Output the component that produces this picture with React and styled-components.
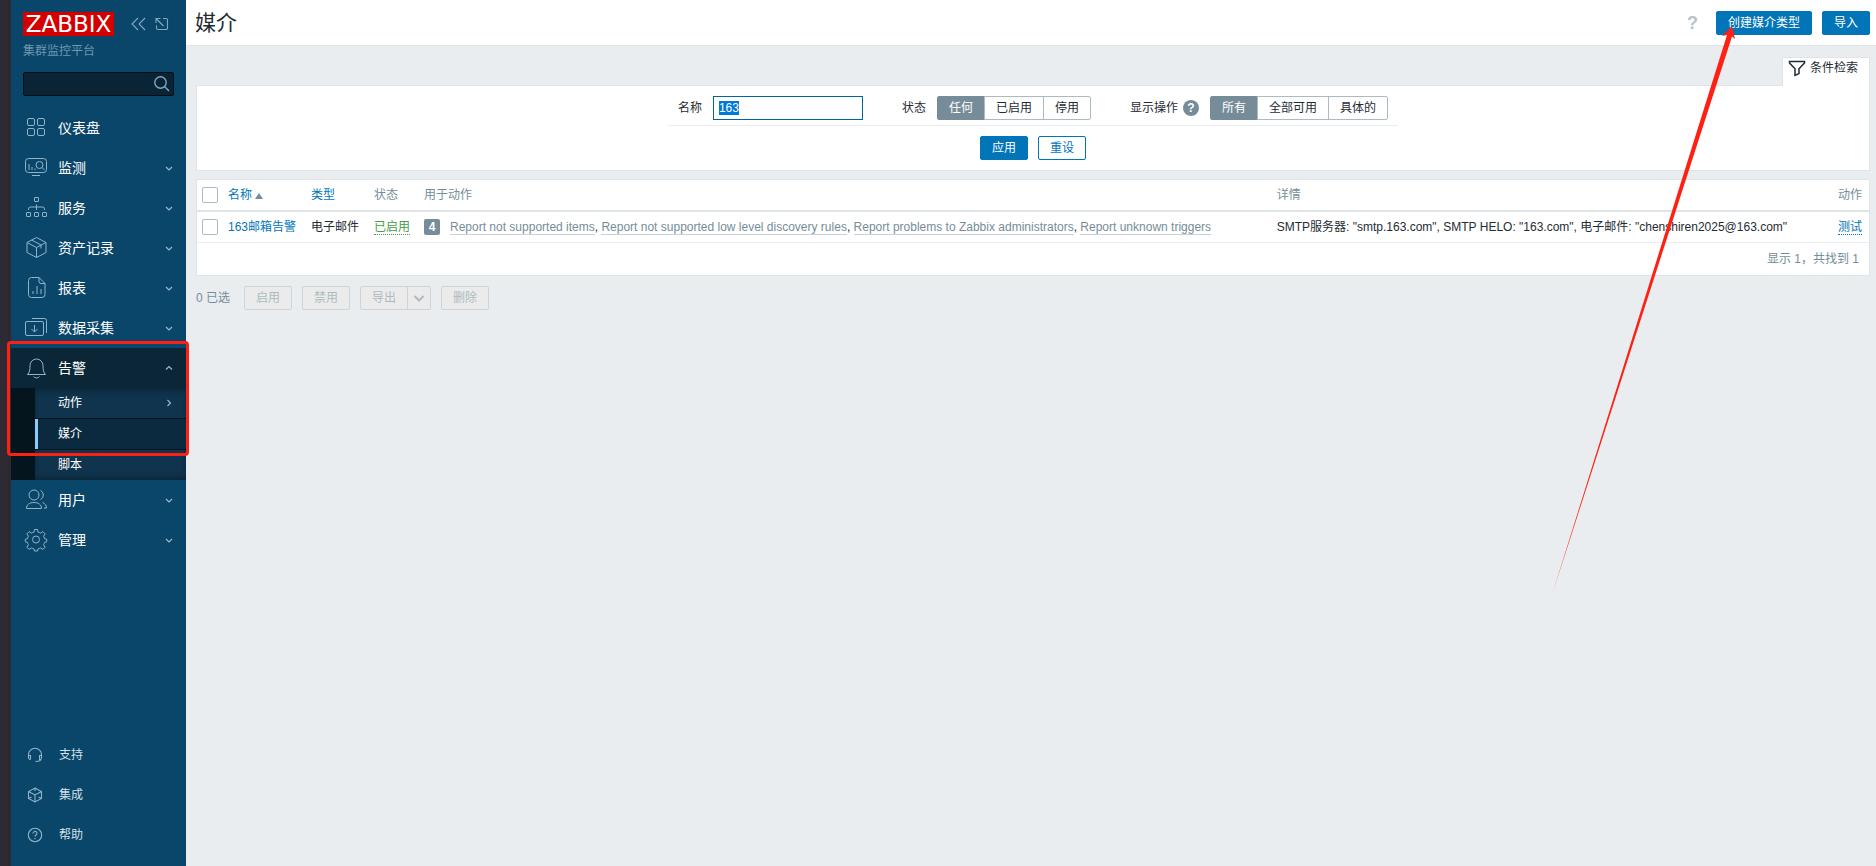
import React, { useEffect, useRef } from "react";
import styled, { createGlobalStyle, css } from "styled-components";

const Global = createGlobalStyle`
  *, *::before, *::after { box-sizing: border-box; }
  html, body { margin: 0; padding: 0; }
  body {
    background: #e9edf0;
    color: #1f2c33;
    font-family: "Liberation Sans", "Noto Sans CJK SC", sans-serif;
    font-size: 12px;
    line-height: 16px;
  }
  button, input { font-family: inherit; font-size: inherit; line-height: inherit; color: inherit; margin: 0; }
  a { text-decoration: none; }
  ul { list-style: none; margin: 0; padding: 0; }
  ::selection { background: #0078d7; color: #fff; }
`;

const Page = styled.div`
  position: relative;
  display: flex;
  min-height: 100vh;
  overflow: hidden;
`;

const Edge = styled.div`
  flex: none;
  width: 11px;
  background: linear-gradient(90deg, #2d2a34 70%, #2b2729 75%, #2f2c30);
`;

/* Sidebar */
const Sidebar = styled.aside`
  position: relative;
  flex: none;
  display: flex;
  flex-direction: column;
  width: 175px;
  padding: 12px 0 11px;
  background: #0a466a;
`;

const Brand = styled.div`
  display: flex;
  align-items: center;
  gap: 17px;
  height: 24px;
  padding: 0 12px;
`;

const Logo = styled.a`
  width: 91px;
  height: 24px;
  background: #d40000;
  color: #fff;
  font-family: "DejaVu Sans", sans-serif;
  font-size: 23px;
  line-height: 24px;
  text-align: center;
`;

const BrandTools = styled.div`
  display: flex;
  gap: 9px;
`;

const IconButton = styled.button`
  display: flex;
  padding: 0;
  border: 0;
  background: none;
  color: #7fa9c2;
  cursor: pointer;
`;

const ServerName = styled.div`
  padding: 7px 12px 0;
  color: #6f97b0;
`;

const Search = styled.form`
  display: flex;
  align-items: center;
  height: 24px;
  margin: 13px 12px 12px;
  padding-right: 3px;
  border: 1px solid #020f17;
  border-radius: 2px;
  background: #0a2435;
`;

const SearchInput = styled.input`
  flex: 1;
  min-width: 0;
  border: 0;
  outline: 0;
  background: none;
  color: #fff;
`;

const Menu = styled.ul`
  flex: 1;
`;

const MenuLink = styled.a`
  display: flex;
  align-items: center;
  height: 40px;
  padding: 0 12px 0 13px;
  color: #fff;
  font-size: 14px;
  background: ${(p) => (p.$open ? "#0a2637" : "none")};
`;

const MenuIcon = styled.span`
  display: flex;
  width: 34px;
  height: 26px;
  color: #8fb5cb;
`;

const MenuLabel = styled.span`
  flex: 1;
`;

const Caret = styled.svg`
  margin-right: 1px;
  color: #9dbccd;
`;

const SubMenu = styled.ul`
  border-left: 24px solid #04151e;
  box-shadow: inset 0 6px 6px -4px #0a2435, inset 0 -6px 6px -4px #0a2435;
  background: #10344d;
`;

const SubItem = styled.li`
  & + & { border-top: 1px solid #04151e; }
`;

const SubLink = styled.a`
  display: flex;
  align-items: center;
  height: 30px;
  padding: 0 12px 0 20px;
  border-left: 3px solid transparent;
  color: #fff;
  ${(p) => p.$current && css`
    border-left-color: #87ceff;
    background: #0b2a3f;
  `}
`;

const FootLink = styled.a`
  display: flex;
  align-items: center;
  gap: 16px;
  height: 40px;
  padding: 0 16px;
  color: #d3e0e8;
  svg { color: #8fb5cb; }
`;

/* Content */
const Content = styled.div`
  flex: 1;
  min-width: 0;
`;

const Header = styled.header`
  display: flex;
  align-items: center;
  gap: 10px;
  height: 46px;
  padding: 0 6px 0 9px;
  border-bottom: 1px solid #dfe4e7;
  background: #fff;
`;

const Title = styled.h1`
  flex: 1;
  margin: 0;
  font-size: 21px;
  line-height: 24px;
  font-weight: 400;
`;

const HelpLink = styled.a`
  margin-right: 8px;
  color: #b6c3ca;
  font-size: 18px;
  line-height: 24px;
  font-weight: 700;
`;

const Button = styled.button`
  height: 24px;
  padding: 0 11px;
  border: 1px solid #0275b8;
  border-radius: 2px;
  background: ${(p) => (p.$alt ? "#fff" : "#0275b8")};
  color: ${(p) => (p.$alt ? "#0275b8" : "#fff")};
  line-height: 22px;
  white-space: nowrap;
  cursor: pointer;
  &:disabled {
    border-color: #ccd5d9;
    background: #ebebeb;
    color: #acbbc2;
    cursor: default;
  }
`;

const Main = styled.main`
  padding: 11px 6px 0 10px;
`;

const Tabs = styled.div`
  display: flex;
  justify-content: flex-end;
`;

const Tab = styled.button`
  display: flex;
  align-items: flex-start;
  gap: 4px;
  height: 29px;
  margin-bottom: -1px;
  padding: 2px 11px 0 5px;
  border: 1px solid #dfe4e7;
  border-bottom: 0;
  background: #fff;
  position: relative;
  cursor: pointer;
  line-height: 16px;
`;

const Panel = styled.section`
  margin-bottom: 8px;
  border: 1px solid #dfe4e7;
  background: #fff;
`;

const FilterForm = styled.form`
  display: flex;
  flex-direction: column;
  align-items: center;
  gap: 10px;
  padding: 10px 0;
`;

const FilterFields = styled.div`
  display: flex;
  align-items: center;
  padding: 0 10px 5px;
  border-bottom: 1px solid #ebeef0;
`;

const Field = styled.div`
  display: flex;
  align-items: center;
  gap: 10px;
  & + & { margin-left: 39px; }
`;

const FieldLabel = styled.span`
  display: flex;
  align-items: center;
  gap: 5px;
  padding-right: 1px;
  white-space: nowrap;
`;

const TextInput = styled.input`
  width: 150px;
  height: 24px;
  padding: 0 5px;
  border: 1px solid #02659f;
  outline: 0;
  background: #fff;
`;

const HelpDot = styled.button`
  width: 16px;
  height: 16px;
  padding: 0;
  border: 0;
  border-radius: 50%;
  background: #768d99;
  color: #fff;
  font-weight: 700;
  line-height: 16px;
`;

const Segments = styled.div`
  display: flex;
`;

const SegmentRadio = styled.input`
  position: absolute;
  opacity: 0;
`;

const Segment = styled.label`
  height: 24px;
  padding: 0 11px;
  border: 1px solid #acbbc2;
  line-height: 22px;
  cursor: pointer;
  & + & { margin-left: -1px; }
  &:first-child { border-radius: 2px 0 0 2px; }
  &:last-child { border-radius: 0 2px 2px 0; }
  &:has(:checked) {
    border-color: #768d99;
    background: #768d99;
    color: #fff;
  }
`;

const ButtonRow = styled.div`
  display: flex;
  gap: 10px;
`;

const Table = styled.table`
  width: 100%;
  table-layout: fixed;
  border-collapse: separate;
  border-spacing: 0;
  white-space: nowrap;
`;

const Col = styled.col`
  width: ${(p) => p.$w};
`;

const Th = styled.th`
  height: 32px;
  padding: ${(p) => (p.$right ? "0 7px" : "0 5px")};
  border-bottom: 2px solid #dfe4e7;
  color: #768d99;
  font-weight: 400;
  text-align: ${(p) => (p.$right ? "right" : "left")};
`;

const Td = styled.td`
  height: 31px;
  padding: ${(p) => (p.$right ? "0 7px" : "0 5px")};
  border-bottom: 1px solid #ebeef0;
  text-align: ${(p) => (p.$right ? "right" : "left")};
`;

const Check = styled.input`
  appearance: none;
  display: block;
  width: 16px;
  height: 16px;
  margin: 0;
  border: 1px solid #acbbc2;
  border-radius: 2px;
  background: #fff;
`;

const Link = styled.a`
  color: #0275b8;
`;

const DottedLink = styled.a`
  border-bottom: 1px dotted;
  color: ${(p) => (p.$ok ? "#429e47" : "#0275b8")};
`;

const GreyLink = styled.a`
  border-bottom: 1px solid #c8d1d6;
  color: #768d99;
`;

const SortMark = styled.span`
  display: inline-block;
  margin-left: 3px;
  border: 4px solid transparent;
  border-top: 0;
  border-bottom: 6px solid #768d99;
`;

const Count = styled.span`
  display: inline-block;
  width: 16px;
  margin-right: 10px;
  border-radius: 2px;
  background: #768d99;
  color: #fff;
  font-weight: 700;
  text-align: center;
`;

const TableFoot = styled.div`
  padding: 8px 10px;
  color: #768d99;
  text-align: right;
`;

const ActionBar = styled.div`
  display: flex;
  align-items: center;
  gap: 10px;
  margin-top: 10px;
  color: #768d99;
`;

const Selected = styled.span`
  margin-right: 4px;
`;

const Split = styled.div`
  display: flex;
  ${Button}:first-child { border-radius: 2px 0 0 2px; }
  ${Button}:last-child {
    display: flex;
    align-items: center;
    margin-left: -1px;
    padding: 0 5px;
    border-radius: 0 2px 2px 0;
  }
`;

/* Annotations drawn over the page */
const Highlight = styled.div`
  position: absolute;
  top: 341px;
  left: -4px;
  right: -3px;
  height: 115px;
  border: 3px solid #fe2012;
  border-radius: 4px;
  pointer-events: none;
  z-index: 2;
`;

const Arrow = styled.svg`
  position: absolute;
  top: 26px;
  right: 140px;
  pointer-events: none;
`;

const glyphs = {
  dashboard: (
    <>
      <rect x="2.5" y="3.5" width="7" height="7" rx="1.5" />
      <rect x="12.5" y="3.5" width="7" height="7" rx="1.5" />
      <rect x="2.5" y="13.5" width="7" height="7" rx="1.5" />
      <rect x="12.5" y="13.5" width="7" height="7" rx="1.5" />
    </>
  ),
  monitoring: (
    <>
      <rect x="0.5" y="3.5" width="21" height="14" rx="3" />
      <path d="M7 20.5h8M4 9v6M7 12v3M10 13.500v1.500M17 12.500l2.500 2.500" />
      <circle cx="14.500" cy="10" r="3.500" />
    </>
  ),
  services: (
    <>
      <rect x="9.500" y="2.500" width="4" height="4" rx="0.500" />
      <rect x="1.500" y="17.500" width="4" height="4" rx="0.500" />
      <rect x="9.500" y="17.500" width="4" height="4" rx="0.500" />
      <rect x="17.500" y="17.500" width="4" height="4" rx="0.500" />
      <path d="M11.500 9.500v5.500M3.500 15v-1a2 2 0 0 1 2-2h12a2 2 0 0 1 2 2v1" />
    </>
  ),
  inventory: (
    <>
      <path d="M11.500 2.500l9.500 5v10l-9.500 5l-9.500-5V7.500z" />
      <path d="M2 7.500l9.500 5l9.500-5M11.500 12.500V22.500M6.500 5l9.500 5v3.500" />
    </>
  ),
  reports: (
    <>
      <path d="M14 2.500H6.500a3 3 0 0 0-3 3v14a3 3 0 0 0 3 3h10.500a3 3 0 0 0 3-3V8.500zM14 2.500v4a2 2 0 0 0 2 2h4" />
      <path d="M8 16v3M12 11v8M16 14v5" />
    </>
  ),
  collection: (
    <>
      <rect x="0.500" y="6.500" width="18" height="14" rx="1.500" />
      <path d="M7 3.500h12.500a2 2 0 0 1 2 2V18M9.500 10v7M6.500 14l3 3l3-3" />
    </>
  ),
  alerts: (
    <path d="M2.500 19.500c2-2 2.500-4.500 2.500-9a6.500 6.500 0 0 1 13 0c0 4.500 0.500 7 2.500 9zM8.500 21.500a3.200 2.200 0 0 0 6 0" />
  ),
  users: (
    <>
      <circle cx="9" cy="8" r="5" />
      <path d="M1.500 21.500c0-4 3-6 7.500-6s7.500 2 7.500 6zM15.500 3.500a5 5 0 0 1 0 9M17.500 15.500c2.500 1 4 3 4 5.500h-2.500" />
    </>
  ),
  admin: (
    <>
      <circle cx="11" cy="12.500" r="3.500" />
      <path d="M9.500 2.500h3l0.600 2.700q1.400 0.200 2.400 0.900l2.400-1.500l2.200 2.200l-1.500 2.400q0.700 1 0.900 2.400l2.200 0.600v2.600l-2.200 0.600q-0.200 1.400-0.900 2.400l1.500 2.400l-2.200 2.200l-2.400-1.500q-1 0.700-2.400 0.900l-0.600 2.200h-3l-0.600-2.200q-1.400-0.200-2.400-0.900l-2.400 1.500l-2.200-2.200l1.500-2.400q-0.700-1-0.900-2.400l-2.200-0.600v-2.600l2.200-0.600q0.200-1.400 0.900-2.400l-1.500-2.400l2.200-2.200l2.400 1.500q1-0.700 2.400-0.900z" strokeLinejoin="round" />
    </>
  ),
};

function Glyph({ name }) {
  return (
    <svg width="24" height="26" viewBox="-1 0 24 26" fill="none" stroke="currentColor" strokeWidth="1" aria-hidden="true">
      {glyphs[name]}
    </svg>
  );
}

const caretPaths = { down: "M1 3l3 3l3-3", up: "M1 5.500l3-3l3 3", right: "M2.500 1l3 3l-3 3" };

function MenuCaret({ dir }) {
  return (
    <Caret width="8" height="8" viewBox="0 0 8 8" fill="none" stroke="currentColor" strokeWidth="1.100" aria-hidden="true">
      <path d={caretPaths[dir]} />
    </Caret>
  );
}

const menu = [
  { icon: "dashboard", label: "仪表盘" },
  { icon: "monitoring", label: "监测", dir: "down" },
  { icon: "services", label: "服务", dir: "down" },
  { icon: "inventory", label: "资产记录", dir: "down" },
  { icon: "reports", label: "报表", dir: "down" },
  { icon: "collection", label: "数据采集", dir: "down" },
  {
    icon: "alerts",
    label: "告警",
    dir: "up",
    children: [{ label: "动作", dir: "right" }, { label: "媒介", current: true }, { label: "脚本" }],
  },
  { icon: "users", label: "用户", dir: "down" },
  { icon: "admin", label: "管理", dir: "down" },
];

const footLinks = [
  {
    label: "支持",
    glyph: <path d="M3.500 12.500H3A2 2 0 0 1 1.500 11V7.500a6.200 6 0 0 1 13 0V11a2 2 0 0 1-1.500 1.500h-.5V8.500h2M1.500 8.500h2v4M14 12c0 2-2 2.500-5.500 2.500" />,
  },
  {
    label: "集成",
    glyph: <path d="M8 1l6.500 3.500v7L8 15l-6.500-3.500v-7zM1.500 4.500L8 8l6.500-3.500M8 8v7M8 1v3M1.500 11.500l3-1.500M14.500 11.500l-3-1.500" />,
  },
  {
    label: "帮助",
    glyph: (
      <>
        <circle cx="8" cy="8" r="6.700" />
        <path d="M6 6.500a2 2 0 1 1 3 1.600c-.7.400-1 .8-1 1.600M8 11v1.200" />
      </>
    ),
  },
];

const reports = [
  "Report not supported items",
  "Report not supported low level discovery rules",
  "Report problems to Zabbix administrators",
  "Report unknown triggers",
];

function SegmentGroup({ name, options }) {
  return (
    <Segments role="radiogroup" aria-label={name}>
      {options.map((o, i) => (
        <Segment key={o}>
          <SegmentRadio type="radio" name={name} defaultChecked={i === 0} />
          {o}
        </Segment>
      ))}
    </Segments>
  );
}

export default function App() {
  const nameRef = useRef(null);
  useEffect(() => {
    nameRef.current.focus();
    nameRef.current.select();
  }, []);

  return (
    <>
      <Global />
      <Page>
        <Edge />
        <Sidebar>
          <Brand>
            <Logo href="#">ZABBIX</Logo>
            <BrandTools>
              <IconButton aria-label="收起侧边栏">
                <svg width="15" height="16" viewBox="0 0 15 16" fill="none" stroke="currentColor" strokeWidth="1.100">
                  <path d="M7 2L1 8l6 6M14 2L8 8l6 6" />
                </svg>
              </IconButton>
              <IconButton aria-label="隐藏侧边栏">
                <svg width="14" height="16" viewBox="0 0 14 16" fill="none" stroke="currentColor" strokeWidth="1.100">
                  <path d="M8 2.500h3a1.500 1.500 0 0 1 1.500 1.500v8a1.500 1.500 0 0 1-1.500 1.500h-8a1.500 1.500 0 0 1-1.500-1.500V9.500M1 2.500l7.500 7.500M1 7V2.500h4.500" />
                </svg>
              </IconButton>
            </BrandTools>
          </Brand>
          <ServerName>集群监控平台</ServerName>
          <Search>
            <SearchInput type="text" aria-label="搜索" />
            <IconButton aria-label="搜索">
              <svg width="17" height="17" viewBox="0 0 17 17" fill="none" stroke="currentColor" strokeWidth="1.400">
                <circle cx="7.500" cy="6.500" r="5.700" />
                <path d="M11.500 10.500L16 15" />
              </svg>
            </IconButton>
          </Search>
          <Menu>
            {menu.map((m) => (
              <li key={m.label}>
                <MenuLink href="#" $open={!!m.children}>
                  <MenuIcon><Glyph name={m.icon} /></MenuIcon>
                  <MenuLabel>{m.label}</MenuLabel>
                  {m.dir && <MenuCaret dir={m.dir} />}
                </MenuLink>
                {m.children && (
                  <SubMenu>
                    {m.children.map((c) => (
                      <SubItem key={c.label}>
                        <SubLink href="#" $current={c.current}>
                          <MenuLabel>{c.label}</MenuLabel>
                          {c.dir && <MenuCaret dir={c.dir} />}
                        </SubLink>
                      </SubItem>
                    ))}
                  </SubMenu>
                )}
              </li>
            ))}
          </Menu>
          <ul>
            {footLinks.map((f) => (
              <li key={f.label}>
                <FootLink href="#">
                  <svg width="16" height="16" viewBox="0 0 16 16" fill="none" stroke="currentColor" strokeWidth="1.100" aria-hidden="true">
                    {f.glyph}
                  </svg>
                  {f.label}
                </FootLink>
              </li>
            ))}
          </ul>
          <Highlight />
        </Sidebar>
        <Content>
          <Header>
            <Title>媒介</Title>
            <HelpLink href="#">?</HelpLink>
            <Button>创建媒介类型</Button>
            <Button>导入</Button>
          </Header>
          <Main>
            <Tabs>
              <Tab>
                <svg width="18" height="18" viewBox="0 0 18 18" fill="none" stroke="currentColor" strokeWidth="1.500" aria-hidden="true">
                  <path d="M1.500 1.500h15v1.400L11 8.800v4.800l-4 1.700V8.800L1.500 2.900z" />
                </svg>
                条件检索
              </Tab>
            </Tabs>
            <Panel>
              <FilterForm onSubmit={(e) => e.preventDefault()}>
                <FilterFields>
                  <Field>
                    <FieldLabel as="label" htmlFor="filter-name">名称</FieldLabel>
                    <TextInput id="filter-name" ref={nameRef} type="text" defaultValue="163" />
                  </Field>
                  <Field>
                    <FieldLabel>状态</FieldLabel>
                    <SegmentGroup name="状态" options={["任何", "已启用", "停用"]} />
                  </Field>
                  <Field>
                    <FieldLabel>
                      显示操作
                      <HelpDot type="button">?</HelpDot>
                    </FieldLabel>
                    <SegmentGroup name="显示操作" options={["所有", "全部可用", "具体的"]} />
                  </Field>
                </FilterFields>
                <ButtonRow>
                  <Button type="submit">应用</Button>
                  <Button type="button" $alt>重设</Button>
                </ButtonRow>
              </FilterForm>
            </Panel>
            <Panel>
              <Table>
                <colgroup>
                  <Col $w="26px" />
                  <Col $w="83px" />
                  <Col $w="63px" />
                  <Col $w="50px" />
                  <Col $w="51%" />
                  <Col />
                  <Col $w="60px" />
                </colgroup>
                <thead>
                  <tr>
                    <Th><Check type="checkbox" aria-label="全选" /></Th>
                    <Th><Link href="#">名称<SortMark /></Link></Th>
                    <Th><Link href="#">类型</Link></Th>
                    <Th>状态</Th>
                    <Th>用于动作</Th>
                    <Th>详情</Th>
                    <Th $right>动作</Th>
                  </tr>
                </thead>
                <tbody>
                  <tr>
                    <Td><Check type="checkbox" aria-label="163邮箱告警" /></Td>
                    <Td><Link href="#">163邮箱告警</Link></Td>
                    <Td>电子邮件</Td>
                    <Td><DottedLink href="#" $ok>已启用</DottedLink></Td>
                    <Td>
                      <Count>4</Count>
                      {reports.map((r, i) => (
                        <React.Fragment key={r}>
                          {i > 0 && ", "}
                          <GreyLink href="#">{r}</GreyLink>
                        </React.Fragment>
                      ))}
                    </Td>
                    <Td>SMTP服务器: "smtp.163.com", SMTP HELO: "163.com", 电子邮件: "chenshiren2025@163.com"</Td>
                    <Td $right><DottedLink href="#">测试</DottedLink></Td>
                  </tr>
                </tbody>
              </Table>
              <TableFoot>显示 1，共找到 1</TableFoot>
            </Panel>
            <ActionBar>
              <Selected>0 已选</Selected>
              <Button disabled>启用</Button>
              <Button disabled>禁用</Button>
              <Split>
                <Button disabled>导出</Button>
                <Button disabled aria-label="导出格式">
                  <svg width="12" height="12" viewBox="0 0 12 12" fill="none" stroke="currentColor" strokeWidth="2" aria-hidden="true">
                    <path d="M1.500 4L6 8.500L10.500 4" />
                  </svg>
                </Button>
              </Split>
              <Button disabled>删除</Button>
            </ActionBar>
          </Main>
        </Content>
        <Arrow width="184" height="570" viewBox="0 0 184 570" aria-hidden="true">
          <path d="M180 0L183 13L180 10.500L0 569L175 9L170 10z" fill="#fe2012" />
        </Arrow>
      </Page>
    </>
  );
}
